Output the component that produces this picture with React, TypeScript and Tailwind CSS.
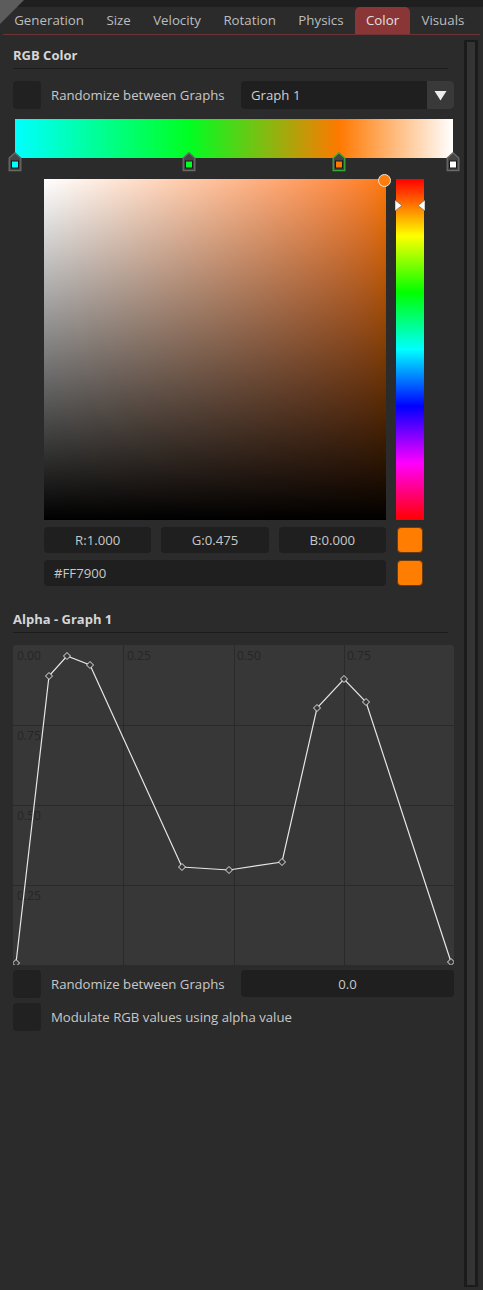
import React from "react";

const TABS = ["Generation", "Size", "Velocity", "Rotation", "Physics", "Color", "Visuals"];

// stops on the gradient bar: position 0..1 and stop colour
const STOPS = [
  { at: 0, color: "#00ffff", selected: false },
  { at: 0.397, color: "#00ff22", selected: false },
  { at: 0.74, color: "#ff7900", selected: true },
  { at: 1, color: "#ffffff", selected: false },
];

// alpha curve points, in graph pixels (441 x 320)
const POINTS: [number, number][] = [
  [3, 318],
  [36, 31],
  [54, 11],
  [77, 20],
  [169, 222],
  [216, 225],
  [269, 217],
  [304, 63],
  [331, 34],
  [353, 57],
  [438, 317],
];

function Checkbox() {
  return <div className="h-[28px] w-[28px] shrink-0 rounded-[4px] bg-[#212121]" />;
}

function SectionTitle({ children, className }: { children: React.ReactNode; className: string }) {
  return (
    <div
      className={`${className} mr-[6px] h-[23px] border-b border-[#1b1b1b] text-[13px] font-bold leading-[18px] text-[#d6d6d6]`}
    >
      {children}
    </div>
  );
}

function StopMarker({ color, selected }: { color: string; selected: boolean }) {
  return (
    <svg width="14" height="20" viewBox="0 0 14 20" className="block">
      <path
        d="M7 0.8 L12.8 6 L12.8 18.6 L1.2 18.6 L1.2 6 Z"
        fill="#454545"
        stroke={selected ? "#33b033" : "#6a6a6a"}
        strokeWidth="1.3"
      />
      <rect x="3.5" y="9" width="7" height="7" fill={color} stroke="#161616" strokeWidth="1" />
    </svg>
  );
}

function AlphaGraph() {
  const line = POINTS.map((p) => p.join(",")).join(" ");
  const lbl = "fill-[#262626] text-[12px]";
  return (
    <svg width="441" height="320" className="block" style={{ fontFamily: "'Open Sans', sans-serif" }}>
      <rect x="0" y="0" width="441" height="320" rx="3" fill="#373737" />
      {[110.5, 221.5, 331.5].map((x) => (
        <line key={x} x1={x} y1="0" x2={x} y2="320" stroke="#2a2a2a" strokeWidth="1" />
      ))}
      {[80.5, 160.5, 240.5].map((y) => (
        <line key={y} x1="0" y1={y} x2="441" y2={y} stroke="#2a2a2a" strokeWidth="1" />
      ))}
      <text x="4" y="15" className={lbl}>0.00</text>
      <text x="114" y="15" className={lbl}>0.25</text>
      <text x="224" y="15" className={lbl}>0.50</text>
      <text x="334" y="15" className={lbl}>0.75</text>
      <text x="4" y="95" className={lbl}>0.75</text>
      <text x="4" y="175" className={lbl}>0.50</text>
      <text x="4" y="255" className={lbl}>0.25</text>
      <polyline points={line} fill="none" stroke="#e6e6e6" strokeWidth="1.2" />
      {POINTS.map(([x, y]) => (
        <path
          key={`${x}-${y}`}
          d={`M${x} ${y - 3.5} L${x + 3.5} ${y} L${x} ${y + 3.5} L${x - 3.5} ${y} Z`}
          fill="#373737"
          stroke="#e6e6e6"
          strokeWidth="1"
        />
      ))}
    </svg>
  );
}

export default function App() {
  return (
    <div
      className="relative flex h-[1290px] w-[483px] flex-col overflow-hidden bg-[#2b2b2b] text-[13.2px] text-[#c8c8c8]"
      style={{ fontFamily: "'Open Sans', 'Noto Sans', sans-serif" }}
    >
      {/* corner grip */}
      <div className="absolute left-0 top-0 h-0 w-0 border-l-[12px] border-t-[12px] border-l-[#5c5c5c] border-t-[#5c5c5c] border-r-[12px] border-b-[12px] border-r-transparent border-b-transparent" />

      <div className="h-[7px] shrink-0 bg-[#1f1f1f]" />

      {/* tabs */}
      <div className="mx-[3px] flex h-[28px] shrink-0 items-end border-b border-[#6e3434] text-[13.3px]">
        {TABS.map((t) => (
          <div
            key={t}
            className={
              t === "Color"
                ? "flex h-[27px] items-center rounded-t-[5px] bg-[#8a3636] px-[11.2px] text-[#e0e0e0]"
                : "flex h-[27px] items-center px-[11.2px] text-[#bdbdbd]"
            }
          >
            {t}
          </div>
        ))}
      </div>

      <div className="flex min-h-0 flex-1">
        {/* panel content */}
        <div className="flex w-[454px] shrink-0 flex-col pl-[13px]">
          <SectionTitle className="mt-[11px]">RGB Color</SectionTitle>

          <div className="mt-[12px] flex h-[28px] items-center">
            <Checkbox />
            <span className="ml-[10px] pt-[2px]">Randomize between Graphs</span>
            <div className="ml-auto flex h-[28px] w-[213px] items-center rounded-[4px] bg-[#1f1f1f]">
              <span className="flex-1 pl-[10px] pt-[2px] text-[#d0d0d0]">Graph 1</span>
              <div className="flex h-full w-[27px] items-center justify-center rounded-r-[4px] bg-[#393939]">
                <svg width="13" height="11" viewBox="0 0 13 11">
                  <path d="M0.5 1 L12.5 1 L6.5 10.5 Z" fill="#ececec" />
                </svg>
              </div>
            </div>
          </div>

          {/* gradient bar with stops */}
          <div className="relative ml-[2px] mt-[10px] h-[52px] w-[438px]">
            <div className="h-[39px] w-full bg-[linear-gradient(to_right,#00ffff_0%,#00ff22_39.7%,#ff7900_74%,#ffffff_100%)]" />
            {STOPS.map((s) => (
              <div
                key={s.at}
                className="absolute top-[33px] -translate-x-1/2"
                style={{ left: `${s.at * 100}%` }}
              >
                <StopMarker color={s.color} selected={s.selected} />
              </div>
            ))}
          </div>

          {/* picker */}
          <div className="ml-[31px] mt-[8px] flex gap-[10px]">
            <div className="relative h-[341px] w-[342px] bg-linear-to-r from-white to-[#ff7900]">
              <div className="h-full w-full bg-linear-to-t from-black to-transparent" />
              <div className="absolute -right-[5px] -top-[5px] h-[13px] w-[13px] rounded-full border-[1.5px] border-[#f2e6dc] bg-[#ff7d0a]" />
            </div>
            <div className="relative h-[341px] w-[28px] bg-[linear-gradient(to_bottom,#ff0000,#ffff00,#00ff00,#00ffff,#0000ff,#ff00ff,#ff0000)]">
              <svg width="7" height="11" viewBox="0 0 7 11" className="absolute -left-[1px] top-[21px]">
                <path d="M0 0 L7 5.5 L0 11 Z" fill="#ffffff" stroke="#555" strokeWidth="0.6" />
              </svg>
              <svg width="7" height="11" viewBox="0 0 7 11" className="absolute -right-[1px] top-[21px]">
                <path d="M7 0 L0 5.5 L7 11 Z" fill="#ffffff" stroke="#555" strokeWidth="0.6" />
              </svg>
            </div>
          </div>

          <div className="ml-[31px] mt-[7px] flex h-[26px] items-center">
            <div className="grid w-[342px] grid-cols-3 gap-[10px]">
              {["R:1.000", "G:0.475", "B:0.000"].map((v) => (
                <div key={v} className="flex h-[26px] items-center justify-center rounded-[4px] bg-[#1f1f1f] pt-[1px]">
                  {v}
                </div>
              ))}
            </div>
            <div className="ml-[11px] h-[26px] w-[26px] rounded-[4px] border border-[#6a3a10] bg-[#ff7d00]" />
          </div>

          <div className="ml-[31px] mt-[7px] flex h-[26px] items-center">
            <div className="flex h-[26px] w-[342px] items-center rounded-[4px] bg-[#1f1f1f] pl-[10px] pt-[1px]">#FF7900</div>
            <div className="ml-[11px] h-[26px] w-[26px] rounded-[4px] border border-[#6a3a10] bg-[#ff7d00]" />
          </div>

          <SectionTitle className="mt-[24px]">Alpha - Graph 1</SectionTitle>

          <div className="mt-[12px]">
            <AlphaGraph />
          </div>

          <div className="mt-[5px] flex h-[27px] items-center">
            <Checkbox />
            <span className="ml-[10px] pt-[2px]">Randomize between Graphs</span>
            <div className="ml-auto flex h-[27px] w-[213px] items-center justify-center rounded-[4px] bg-[#1f1f1f] pt-[2px]">
              0.0
            </div>
          </div>

          <div className="mt-[6px] flex h-[27px] items-center">
            <Checkbox />
            <span className="ml-[10px] pt-[2px]">Modulate RGB values using alpha value</span>
          </div>
        </div>

        {/* scrollbar */}
        <div className="ml-[10px] mt-[5px] mb-[3px] w-[14px] border-x-[3px] border-y-[2px] border-[#1b1b1b] bg-[#343434]" />
      </div>
    </div>
  );
}
